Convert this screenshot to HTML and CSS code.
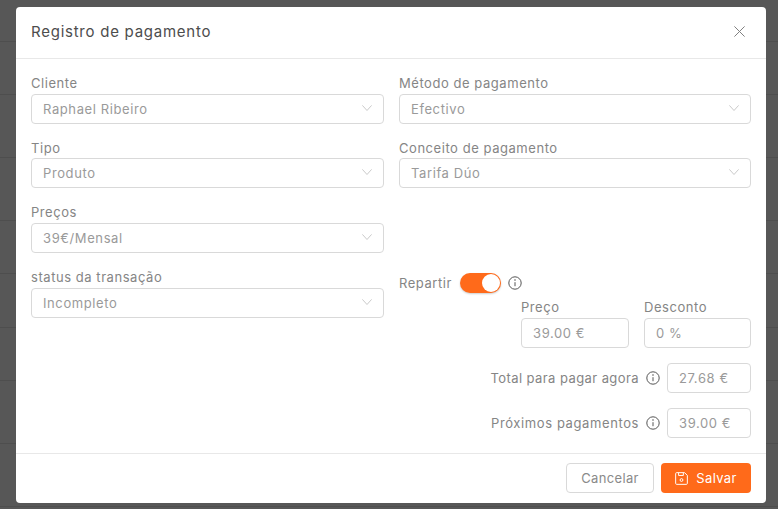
FILE: index.html
```html
<!DOCTYPE html>
<html lang="pt">
<head>
<meta charset="utf-8">
<title>Registro de pagamento</title>
<link rel="stylesheet" href="styles.css">
</head>
<body>
<div class="backdrop">
  <div class="bg-row r41"></div>
  <div class="bg-row r53"></div>
  <div class="bg-row r63"></div>
  <div class="bg-row r63"></div>
  <div class="bg-row r53"></div>
  <div class="bg-row r54"></div>
  <div class="bg-row r53"></div>
  <div class="bg-row r63"></div>
  <div class="bg-row r63"></div>
</div>
<section class="modal">
  <header class="modal-head">
    <h1>Registro de pagamento</h1>
    <svg class="close" viewBox="0 0 11 11"><path d="M.4.4l10.200 10.200M10.600.4L.4 10.600"/></svg>
  </header>
  <div class="modal-body">
    <div class="col">
      <div class="field"><label>Cliente</label><div class="select">Raphael Ribeiro<svg class="chev" viewBox="0 0 10 6"><path d="M.4.4L5 5.500 9.600.4"/></svg></div></div>
      <div class="field"><label>Tipo</label><div class="select">Produto<svg class="chev" viewBox="0 0 10 6"><path d="M.4.4L5 5.500 9.600.4"/></svg></div></div>
      <div class="field"><label>Preços</label><div class="select">39€/Mensal<svg class="chev" viewBox="0 0 10 6"><path d="M.4.4L5 5.500 9.600.4"/></svg></div></div>
      <div class="field"><label>status da transação</label><div class="select">Incompleto<svg class="chev" viewBox="0 0 10 6"><path d="M.4.4L5 5.500 9.600.4"/></svg></div></div>
    </div>
    <div class="col">
      <div class="field"><label>Método de pagamento</label><div class="select">Efectivo<svg class="chev" viewBox="0 0 10 6"><path d="M.4.4L5 5.500 9.600.4"/></svg></div></div>
      <div class="field"><label>Conceito de pagamento</label><div class="select">Tarifa Dúo<svg class="chev" viewBox="0 0 10 6"><path d="M.4.4L5 5.500 9.600.4"/></svg></div></div>
      <div class="split-row">
        <span class="split-label">Repartir</span>
        <span class="toggle"><span class="knob"></span></span>
        <svg class="info" viewBox="0 0 14 14"><circle cx="7" cy="7" r="6.200"/><path d="M7 6.200v4"/><circle class="dot" cx="7" cy="4" r=".8"/></svg>
      </div>
      <div class="price-row">
        <div class="field-sm price"><label>Preço</label><div class="box">39.00 €</div></div>
        <div class="field-sm discount"><label>Desconto</label><div class="box">0 %</div></div>
      </div>
      <div class="total-row">
        <span>Total para pagar agora</span>
        <svg class="info" viewBox="0 0 14 14"><circle cx="7" cy="7" r="6.200"/><path d="M7 6.200v4"/><circle class="dot" cx="7" cy="4" r=".8"/></svg>
        <div class="box narrow">27.68 €</div>
      </div>
      <div class="total-row next">
        <span>Próximos pagamentos</span>
        <svg class="info" viewBox="0 0 14 14"><circle cx="7" cy="7" r="6.200"/><path d="M7 6.200v4"/><circle class="dot" cx="7" cy="4" r=".8"/></svg>
        <div class="box narrow">39.00 €</div>
      </div>
    </div>
  </div>
  <footer class="modal-foot">
    <button class="btn cancel" type="button">Cancelar</button>
    <button class="btn save" type="button">
      <svg class="save-icon" viewBox="0 0 12 12"><path d="M1.500.6h7.300l2.600 2.500v7.400a.9.900 0 0 1-.9.900H1.500a.9.900 0 0 1-.9-.9V1.500a.9.900 0 0 1 .9-.9z"/><path d="M3.300.8v2.400h4.400V.8"/><circle cx="6" cy="7.400" r="1.300"/></svg>
      Salvar
    </button>
  </footer>
</section>
</body>
</html>
```

FILE: styles.css
```css
* { box-sizing: border-box; }
html, body { margin: 0; height: 100%; }
body {
  position: relative;
  width: 778px;
  height: 509px;
  overflow: hidden;
  background: #575757;
  font-family: Inter, "Noto Sans", sans-serif;
  color: #8a8a8a;
}
.backdrop { display: flex; flex-direction: column; }
.bg-row { border-bottom: 1px solid #4e4e4e; flex: none; }
.r41 { height: 42px; }
.r53 { height: 53px; }
.r54 { height: 54px; }
.r63 { height: 63px; }

.modal {
  position: absolute;
  left: 16px;
  top: 7px;
  width: 750px;
  height: 496px;
  background: #fff;
  border-radius: 4px;
  display: flex;
  flex-direction: column;
}
.modal-head {
  height: 52px;
  flex: none;
  display: flex;
  align-items: center;
  justify-content: space-between;
  padding: 0 21px 2px 15px;
  border-bottom: 1px solid #e8e8e8;
}
h1 {
  margin: 0;
  font-size: 15px;
  font-weight: 400;
  letter-spacing: .75px;
  color: #4d4d4d;
}
.close { width: 11px; height: 11px; fill: none; stroke: #808080; stroke-width: 1; }

.modal-body {
  flex: 1;
  display: grid;
  grid-template-columns: 353px 352px;
  column-gap: 15px;
  padding: 15px 15px 0;
}
.col { display: flex; flex-direction: column; }
.field { margin-bottom: 15px; }
label {
  display: block;
  height: 20px;
  font-size: 13px;
  line-height: 18px;
  letter-spacing: .55px;
  color: #858585;
}
.field:nth-child(2) label { height: 19px; }
.select, .box {
  height: 30px;
  border: 1px solid #d9d9d9;
  border-radius: 4px;
  font-size: 13px;
  letter-spacing: .6px;
  color: #9a9a9a;
  display: flex;
  align-items: center;
}
.select { justify-content: space-between; padding: 0 11px; }
.chev { width: 10px; height: 6px; fill: none; stroke: #c4c4c4; stroke-width: .9; margin-top: -2px; }

.split-row {
  display: flex;
  align-items: center;
  height: 20px;
  margin-top: 70px;
}
.split-label { width: 61px; font-size: 13px; letter-spacing: .55px; color: #858585; }
.toggle {
  width: 41px;
  height: 20px;
  background: #ff6a1a;
  border-radius: 10px;
  display: flex;
  align-items: center;
  justify-content: flex-end;
  padding-right: 1px;
  box-shadow: 0 1px 2px rgba(0,0,0,.2);
  margin-right: 7px;
}
.knob { width: 18px; height: 18px; border-radius: 50%; background: #fff; }
.info { width: 14px; height: 14px; flex: none; fill: none; stroke: #555; stroke-width: 1; }
.info .dot { fill: #555; stroke: none; }

.price-row {
  display: flex;
  justify-content: flex-end;
  gap: 15px;
  margin-top: 5px;
}
.price { width: 108px; }
.discount { width: 107px; }
.box { padding: 0 11px; }
.narrow { width: 84px; flex: none; margin-left: 7px; }
.total-row {
  display: flex;
  justify-content: flex-end;
  align-items: center;
  margin-top: 15px;
  font-size: 13px;
  letter-spacing: .42px;
  color: #858585;
}
.total-row .info { margin-left: 7px; }
.total-row.next { margin-top: 15px; letter-spacing: .6px; }

.modal-foot {
  height: 50px;
  flex: none;
  display: flex;
  justify-content: flex-end;
  align-items: center;
  gap: 7px;
  padding: 0 15px 1px 0;
  border-top: 1px solid #e8e8e8;
}
.btn {
  height: 30px;
  border-radius: 4px;
  font-family: inherit;
  font-size: 13px;
  letter-spacing: .35px;
  display: flex;
  align-items: center;
  justify-content: center;
  cursor: pointer;
}
.cancel { width: 88px; background: #fff; border: 1px solid #d9d9d9; color: #8a8a8a; }
.save { width: 90px; background: #ff6a1a; border: 0; color: #fff; gap: 8px; }
.save-icon { width: 13px; height: 13px; fill: none; stroke: #fff; stroke-width: .9; }
```
